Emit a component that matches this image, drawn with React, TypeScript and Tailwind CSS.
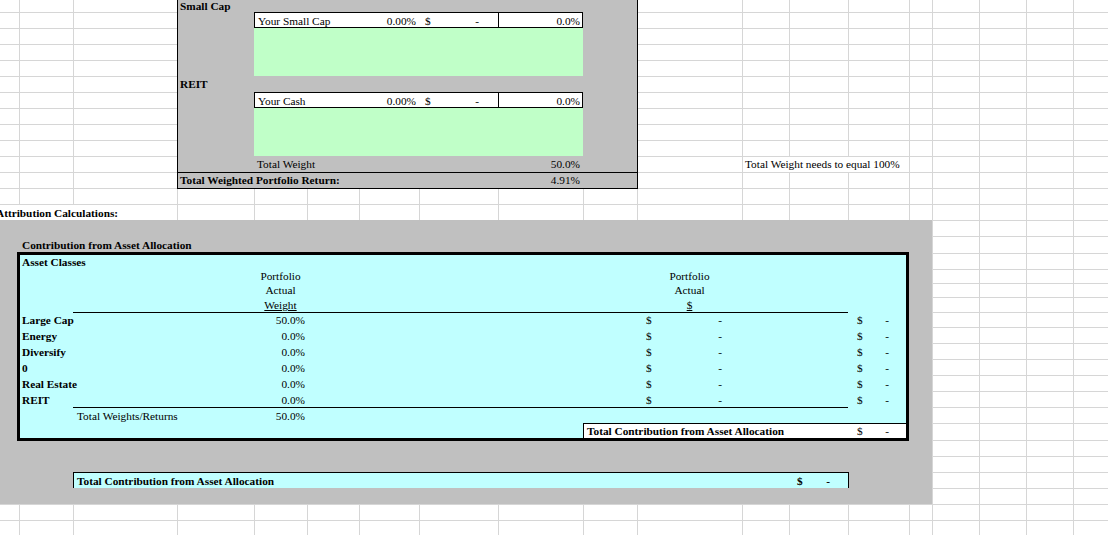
import React from "react";

const GRID =
  "grid grid-cols-[19px_54px_104px_77px_53px_52px_60px_79px_85px_54px_105px_47px_59px_61px_23px_47px_47px_47px_47px] grid-rows-[12px_repeat(14,16px)_17px_16px_14px_14px_15px_15px_16px_16px_16px_16px_16px_16px_17px_16px_16px_16px_16px_16px_16px]";

const T = "flex items-end leading-[13px] whitespace-nowrap";

const NCOLS = 19;
const NROWS = 34;

function InputRow({ rowCls, label }: { rowCls: string; label: string }) {
  return (
    <>
      <div className={`col-[5/9] ${rowCls} mr-[-1px] bg-white border border-black`} />
      <div className={`col-[9/10] ${rowCls} bg-white border border-black`} />
      <div className={`col-[5/7] ${rowCls} pl-[4px] ${T}`}>{label}</div>
      <div className={`col-[7/8] ${rowCls} justify-end pr-[3px] ${T}`}>0.00%</div>
      <div className={`col-[8/9] ${rowCls} justify-between pl-[6px] pr-[19px] ${T}`}>
        <span>$</span>
        <span>-</span>
      </div>
      <div className={`col-[9/10] ${rowCls} justify-end pr-[3px] ${T}`}>0.0%</div>
    </>
  );
}

const dataRows: { label: string; pct: string; rowCls: string }[] = [
  { label: "Large Cap", pct: "50.0%", rowCls: "row-[21/22]" },
  { label: "Energy", pct: "0.0%", rowCls: "row-[22/23]" },
  { label: "Diversify", pct: "0.0%", rowCls: "row-[23/24]" },
  { label: "0", pct: "0.0%", rowCls: "row-[24/25]" },
  { label: "Real Estate", pct: "0.0%", rowCls: "row-[25/26]" },
  { label: "REIT", pct: "0.0%", rowCls: "row-[26/27]" },
];

export default function App() {
  const cells: React.ReactNode[] = [];
  for (let r = 0; r < NROWS; r++) {
    for (let c = 0; c < NCOLS; c++) {
      const cls =
        r === 0
          ? c === 0
            ? ""
            : "border-l border-[#d6d6d6]"
          : c === 0
          ? "border-t border-[#d6d6d6]"
          : "border-t border-l border-[#d6d6d6]";
      cells.push(<div key={`${r}-${c}`} className={cls} />);
    }
  }

  return (
    <div className="w-[1108px] h-[535px] overflow-hidden bg-white text-black text-[11.3px] font-['Liberation_Serif','Times_New_Roman',serif]">
      <div className="grid w-max">
        {/* sheet gridlines */}
        <div className={`col-start-1 row-start-1 ${GRID}`}>{cells}</div>

        {/* sheet content */}
        <div className={`col-start-1 row-start-1 ${GRID}`}>
          {/* ---------- top input block ---------- */}
          <div className="col-[4/11] row-[1/13] mr-[-1px] mb-[-1px] bg-[#c0c0c0] border-l border-r border-b border-black" />
          <div className="col-[4/7] row-[1/2] pl-[3px] font-bold flex items-end leading-[12px] whitespace-nowrap">
            Small Cap
          </div>
          <InputRow rowCls="row-[2/3]" label="Your Small Cap" />
          <div className="col-[5/10] row-[3/6] bg-[#c0ffc8]" />

          <div className={`col-[4/7] row-[6/7] pl-[3px] pb-[1px] font-bold ${T}`}>REIT</div>
          <InputRow rowCls="row-[7/8]" label="Your Cash" />
          <div className="col-[5/10] row-[8/11] bg-[#c0ffc8]" />

          <div className={`col-[5/7] row-[11/12] pl-[3px] pb-px ${T}`}>Total Weight</div>
          <div className={`col-[9/10] row-[11/12] justify-end pr-[3px] pb-px ${T}`}>50.0%</div>

          <div className="col-[4/11] row-[12/13] mr-[-1px] border-t border-black" />
          <div className={`col-[4/9] row-[12/13] pl-[3px] pb-px font-bold ${T}`}>Total Weighted Portfolio Return:</div>
          <div className={`col-[9/10] row-[12/13] justify-end pr-[3px] pb-px ${T}`}>4.91%</div>

          <div className={`col-[12/15] row-[11/12] bg-white border-t border-l border-[#d6d6d6] pl-[2px] pb-px ${T}`}>
            Total Weight needs to equal 100%
          </div>

          <div className={`col-[1/4] row-[14/15] bg-white border-t border-[#d6d6d6] font-bold ${T}`}>
            <span className="ml-[-4px]">Attribution Calculations:</span>
          </div>

          {/* ---------- attribution block ---------- */}
          <div className="col-[1/16] row-[15/33] bg-[#c0c0c0]" />
          <div className={`col-[2/8] row-[16/17] pl-[3px] pb-[1px] font-bold ${T}`}>
            Contribution from Asset Allocation
          </div>

          <div className="col-[2/15] row-[17/29] ml-[-2px] mt-[-1px] mb-[-1px] bg-[#c0ffff] border-[3px] border-black" />

          <div className={`col-[2/5] row-[17/18] pl-[3px] font-bold ${T}`}>Asset Classes</div>

          <div className={`col-[5/6] row-[18/19] justify-center ${T}`}>Portfolio</div>
          <div className={`col-[5/6] row-[19/20] justify-center ${T}`}>Actual</div>
          <div className={`col-[5/6] row-[20/21] justify-center ${T}`}>
            <span className="underline">Weight</span>
          </div>
          <div className={`col-[11/12] row-[18/19] justify-center ${T}`}>Portfolio</div>
          <div className={`col-[11/12] row-[19/20] justify-center ${T}`}>Actual</div>
          <div className={`col-[11/12] row-[20/21] justify-center ${T}`}>
            <span className="underline">$</span>
          </div>

          <div className="col-[3/14] row-[21/22] border-t border-black" />
          <div className="col-[3/14] row-[27/28] border-t border-black" />

          {dataRows.map((d) => (
            <React.Fragment key={d.label}>
              <div className={`col-[2/4] ${d.rowCls} pl-[3px] font-bold ${T}`}>{d.label}</div>
              <div className={`col-[5/6] ${d.rowCls} justify-end pr-[2px] ${T}`}>{d.pct}</div>
              <div className={`col-[11/12] ${d.rowCls} justify-between pl-[9px] pr-[20px] ${T}`}>
                <span>$</span>
                <span>-</span>
              </div>
              <div className={`col-[14/15] ${d.rowCls} justify-between pl-[9px] pr-[20px] ${T}`}>
                <span>$</span>
                <span>-</span>
              </div>
            </React.Fragment>
          ))}

          <div className={`col-[3/5] row-[27/28] pl-[4px] ${T}`}>Total Weights/Returns</div>
          <div className={`col-[5/6] row-[27/28] justify-end pr-[2px] ${T}`}>50.0%</div>

          <div className="col-[10/15] row-[28/29] mr-[3px] mb-[2px] bg-white border-t border-l border-black" />
          <div className={`col-[10/14] row-[28/29] pl-[4px] pb-[2px] font-bold ${T}`}>
            Total Contribution from Asset Allocation
          </div>
          <div className={`col-[14/15] row-[28/29] justify-between pl-[9px] pr-[20px] pb-[2px] ${T}`}>
            <span>$</span>
            <span>-</span>
          </div>

          <div className="col-[3/14] row-[31/32] mr-[-1px] bg-[#c0ffff] border-t border-l border-r border-black" />
          <div className={`col-[3/10] row-[31/32] pl-[4px] font-bold ${T}`}>
            Total Contribution from Asset Allocation
          </div>
          <div className={`col-[13/14] row-[31/32] justify-between pl-[8px] pr-[18px] font-bold ${T}`}>
            <span>$</span>
            <span>-</span>
          </div>
        </div>
      </div>
    </div>
  );
}
